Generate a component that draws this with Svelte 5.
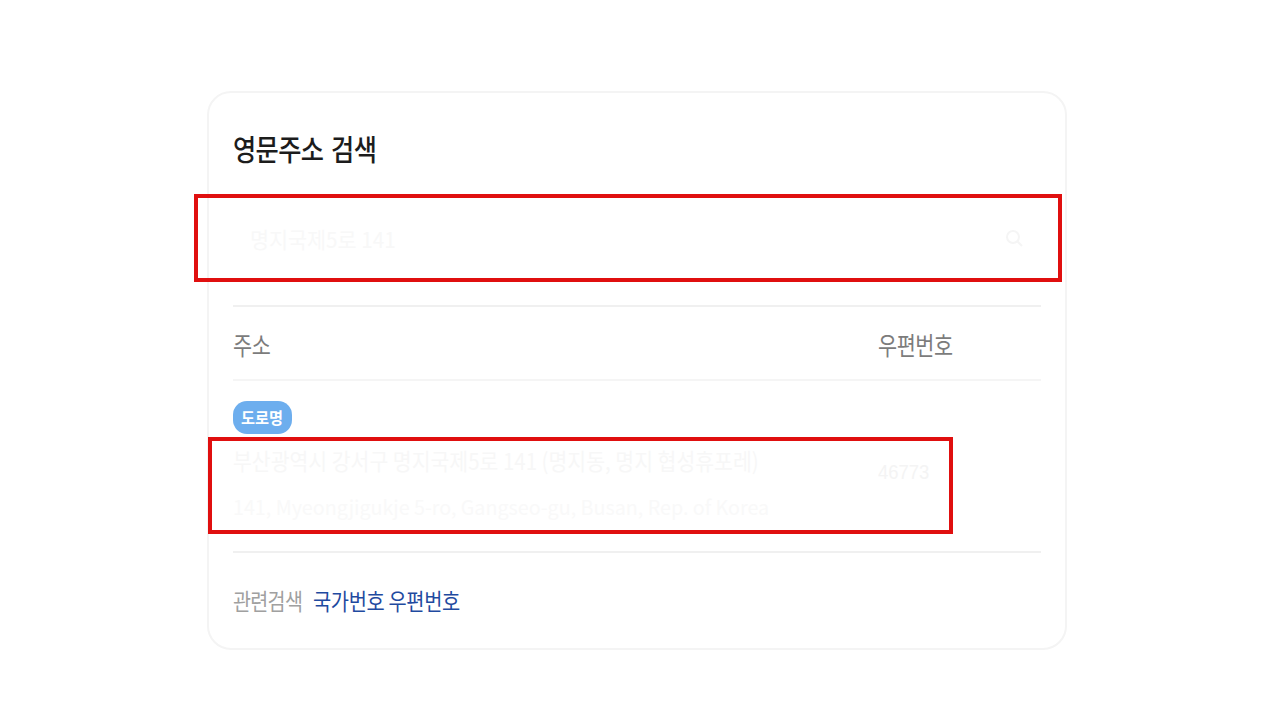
<script>
  const tableHeads = ['주소', '우편번호'];
  const address = {
    badge: '도로명',
    korean: '부산광역시 강서구 명지국제5로 141 (명지동, 명지 협성휴포레)',
    english: '141, Myeongjigukje 5-ro, Gangseo-gu, Busan, Rep. of Korea',
    zip: '46773'
  };
</script>

<main class="page">
  <section class="card">
    <div class="title"><h1>영문주소 검색</h1></div>

    <div class="search">
      <span class="query">명지국제5로 141</span>
      <svg class="searchIcon" width="22" height="22" viewBox="0 0 22 22" fill="none" stroke="#f5f5f5" stroke-width="2">
        <circle cx="10" cy="10" r="6" />
        <path d="M14.5 14.5 L19 19" />
      </svg>
    </div>

    <div class="tableHead">
      <div class="colAddress"><span class="headText">{tableHeads[0]}</span></div>
      <div class="colZip"><span class="headText">{tableHeads[1]}</span></div>
    </div>

    <div class="result">
      <span class="badge"><span class="badgeText">{address.badge}</span></span>
      <div class="resultRow">
        <div class="colAddress">
          <p class="korean">{address.korean}</p>
          <p class="english">{address.english}</p>
        </div>
        <div class="colZip zip">{address.zip}</div>
      </div>
    </div>

    <div class="related">
      <span class="relatedLabel">관련검색</span>
      <span class="relatedLink">국가번호 우편번호</span>
    </div>

    <div class="redBox redSearch"></div>
    <div class="redBox redResult"></div>
  </section>
</main>

<style>
  :global(body) {
    margin: 0;
    background: #fff;
    font-family: "Noto Sans CJK KR", "Liberation Sans", sans-serif;
  }
  .page {
    width: 1280px;
    height: 720px;
    box-sizing: border-box;
    padding: 91px 0 0 207px;
    overflow: hidden;
  }
  .card {
    position: relative;
    width: 860px;
    height: 559px;
    box-sizing: border-box;
    padding: 0 24px 0 24px;
    border: 2px solid #f4f4f4;
    border-radius: 24px;
    background: #fff;
  }
  .title {
    height: 111px;
    box-sizing: border-box;
    padding-top: 30px;
  }
  .title h1 {
    margin: 0;
    display: inline-block;
    font-size: 29px;
    line-height: 50px;
    font-weight: 500;
    color: #1c1c1c;
    letter-spacing: -0.7px;
    word-spacing: 3px;
    transform: scaleX(0.87);
    transform-origin: left;
    white-space: nowrap;
  }
  .search {
    height: 101px;
    display: flex;
    align-items: center;
    justify-content: space-between;
    box-sizing: border-box;
    padding: 0 16px 34px 17px;
  }
  .query {
    font-size: 22px;
    color: #f8f8f8;
    transform: scaleX(0.94);
    transform-origin: left;
  }
  .searchIcon {
    display: block;
  }
  .tableHead {
    height: 76px;
    display: flex;
    align-items: center;
    border-top: 2px solid #f0f0f0;
    border-bottom: 2px solid #f5f5f5;
    box-sizing: border-box;
    font-size: 25px;
    color: #7c7c7c;
    letter-spacing: -0.5px;
    padding-top: 2px;
  }
  .headText {
    display: inline-block;
    transform: scaleX(0.83);
    transform-origin: left;
  }
  .colAddress {
    flex: 0 0 645px;
  }
  .colZip {
    flex: 1;
  }
  .result {
    height: 172px;
    box-sizing: border-box;
    padding-top: 20px;
    border-bottom: 2px solid #f0f0f0;
  }
  .badge {
    display: block;
    width: 59px;
    height: 33px;
    line-height: 33px;
    border-radius: 14px;
    background: #6daeee;
    color: #fff;
    font-size: 16px;
    font-weight: 700;
    text-align: center;
  }
  .badgeText {
    display: inline-block;
    transform: scaleX(0.95);
  }
  .resultRow {
    display: flex;
    align-items: flex-start;
    padding-top: 7px;
  }
  .korean {
    margin: 0;
    font-size: 23px;
    line-height: 38px;
    color: #f7f7f7;
    white-space: nowrap;
    transform: scaleX(0.89);
    transform-origin: left;
  }
  .english {
    margin: 12px 0 0;
    font-size: 20px;
    line-height: 32px;
    color: #f9f9f9;
    white-space: nowrap;
    transform: scaleX(0.985);
    transform-origin: left;
  }
  .zip {
    font-family: "Liberation Sans", sans-serif;
    font-size: 21px;
    line-height: 38px;
    margin-top: 12px;
    color: #f4f4f4;
    transform: scaleX(0.88);
    transform-origin: left;
  }
  .related {
    display: flex;
    align-items: center;
    height: 97px;
    padding-bottom: 4px;
    box-sizing: border-box;
  }
  .relatedLabel {
    font-size: 23px;
    color: #a0a0a0;
    letter-spacing: -0.8px;
    width: 80px;
    white-space: nowrap;
    transform: scaleX(0.85);
    transform-origin: left;
  }
  .relatedLink {
    font-size: 23px;
    color: #1f4aa0;
    letter-spacing: -0.4px;
    white-space: nowrap;
    transform: scaleX(0.86);
    transform-origin: left;
  }
  /* annotation boxes drawn over the card */
  .redBox {
    position: absolute;
    box-sizing: border-box;
    border: 4px solid #e00f0f;
  }
  .redSearch {
    left: -15px;
    top: 101px;
    width: 868px;
    height: 88px;
  }
  .redResult {
    left: -1px;
    top: 344px;
    width: 745px;
    height: 97px;
  }
</style>
